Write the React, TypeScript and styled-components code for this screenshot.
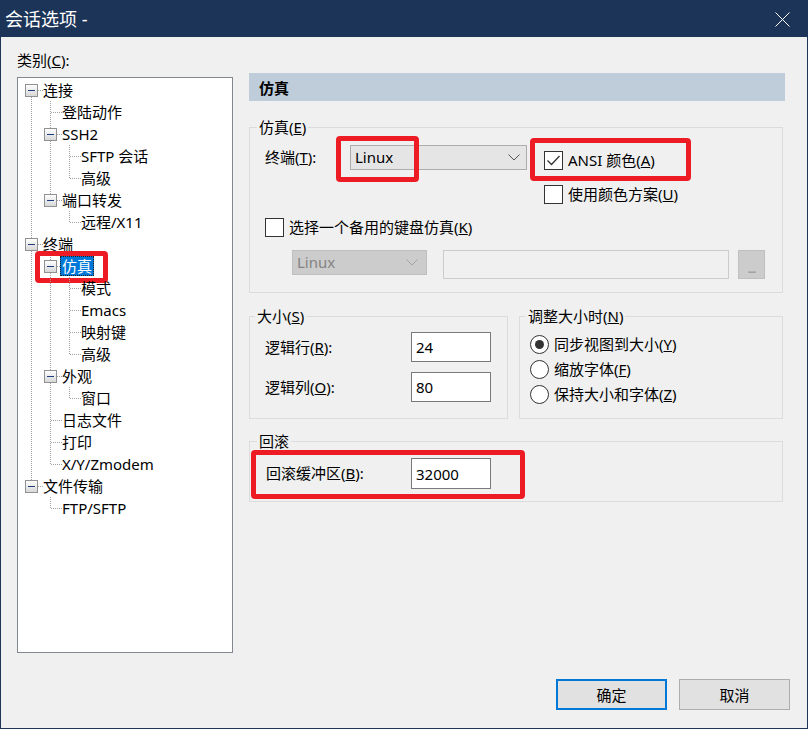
import React, { useId } from "react";
import styled, { createGlobalStyle, css } from "styled-components";

const GlobalStyle = createGlobalStyle`
  html, body {
    margin: 0;
    padding: 0;
    background: #f0f0f0;
  }
  body {
    font-family: "Noto Sans", "Noto Sans CJK SC", sans-serif;
    font-size: 15px;
    color: #000;
  }
  * {
    box-sizing: border-box;
  }
`;

const Window = styled.div`
  width: 808px;
  height: 729px;
  border: 1px solid #1c3458;
  background: #f0f0f0;
  display: flex;
  flex-direction: column;
`;

const TitleBar = styled.div`
  height: 36px;
  flex: none;
  background: #1c3458;
  color: #fff;
  display: flex;
  align-items: center;
  justify-content: space-between;
  padding: 0 17px 0 4px;
  font-size: 18px;
  line-height: 36px;
`;

const Body = styled.div`
  display: grid;
  grid-template-columns: 216px 536px;
  column-gap: 16px;
  padding: 13px 0 0 16px;
`;

const CategoryLabel = styled.div`
  height: 20px;
  line-height: 20px;
`;

const Tree = styled.div`
  margin-top: 7px;
  height: 576px;
  border: 1px solid #828790;
  background: #fff;
  padding-top: 1px;
`;

const TreeRow = styled.div`
  position: relative;
  display: flex;
  align-items: center;
  height: 22px;
  padding-left: 7px;
`;

const GuideSvg = styled.svg`
  flex: none;
  display: block;
  stroke: #a0a0a0;
  stroke-width: 1;
  stroke-dasharray: 1 1;
`;

const NodeLabel = styled.span<{ $selected?: boolean }>`
  margin-left: -3px;
  padding: 0 2px;
  line-height: 20px;
  white-space: nowrap;
  ${(p) =>
    p.$selected &&
    css`
      background: #0078d7;
      color: #fff;
      outline: 1px dotted #222;
      outline-offset: -1px;
    `}
`;

const Mark = styled.span<{ $l: number; $t: number; $w: number; $h: number }>`
  position: absolute;
  left: ${(p) => p.$l}px;
  top: ${(p) => p.$t}px;
  width: ${(p) => p.$w}px;
  height: ${(p) => p.$h}px;
  border: 5px solid #ed1c24;
  border-radius: 4px;
  pointer-events: none;
`;

const Panel = styled.div`
  display: flex;
  flex-direction: column;
  padding-top: 23px;
`;

const PanelHeader = styled.div`
  height: 28px;
  background: #bfcddb;
  padding-left: 10px;
  font-weight: bold;
  line-height: 30px;
`;

const Group = styled.fieldset<{ $top: number }>`
  margin: ${(p) => p.$top}px 2px 0 0;
  padding: 0;
  border: 1px solid #dcdcdc;
  min-width: 0;
`;

const GroupTitle = styled.legend<{ $offset: number }>`
  margin-left: ${(p) => p.$offset}px;
  padding: 0 2px;
  line-height: 18px;
`;

const GroupBody = styled.div<{ $pad: string }>`
  padding: ${(p) => p.$pad};
`;

const FlexRow = styled.div<{ $top?: number; $indent?: number }>`
  position: relative;
  display: flex;
  align-items: flex-start;
  margin-top: ${(p) => p.$top ?? 0}px;
  margin-left: ${(p) => p.$indent ?? 0}px;
`;

const FieldLabel = styled.span<{ $w: number; $h: number }>`
  flex: none;
  width: ${(p) => p.$w}px;
  line-height: ${(p) => p.$h}px;
  white-space: nowrap;
`;

const Select = styled.div<{ $w: number; $disabled?: boolean }>`
  position: relative;
  flex: none;
  width: ${(p) => p.$w}px;
  height: 25px;
  display: flex;
  align-items: center;
  justify-content: space-between;
  padding: 0 ${(p) => (p.$disabled ? 8 : 6)}px 0 4px;
  border: 1px solid ${(p) => (p.$disabled ? "#bfbfbf" : "#adadad")};
  background: ${(p) => (p.$disabled ? "#cccccc" : "#e5e5e5")};
  color: ${(p) => (p.$disabled ? "#838383" : "#000")};
  line-height: 23px;
  svg {
    stroke: ${(p) => (p.$disabled ? "#a5a5a5" : "#555")};
  }
`;

const CheckColumn = styled.div`
  margin: 5px 0 0 17px;
  display: flex;
  flex-direction: column;
  gap: 14px;
`;

const CheckLine = styled.label`
  position: relative;
  display: flex;
  align-items: center;
  height: 20px;
  line-height: 20px;
  white-space: nowrap;
`;

const CheckBox = styled.span`
  flex: none;
  width: 19px;
  height: 19px;
  margin-right: 5px;
  border: 1px solid #333;
  background: #fff;
  display: flex;
  align-items: center;
  justify-content: center;
`;

const DisabledField = styled.div`
  flex: none;
  width: 286px;
  height: 29px;
  margin-left: 16px;
  border: 1px solid #cccccc;
  background: #f0f0f0;
`;

const BrowseButton = styled.div`
  flex: none;
  width: 27px;
  height: 29px;
  margin-left: 9px;
  border: 1px solid #bfbfbf;
  background: #cccccc;
  color: #8a8a8a;
  font-size: 13px;
  line-height: 34px;
  text-align: center;
  letter-spacing: -1px;
`;

const SizeRow = styled.div`
  display: flex;
  gap: 11px;
  margin: 14px 2px 0 0;
`;

const SizeGroup = styled(Group)<{ $w: number }>`
  margin: 0;
  width: ${(p) => p.$w}px;
  flex: none;
`;

const NumberBox = styled.input<{ $h: number }>`
  flex: none;
  width: 80px;
  height: ${(p) => p.$h}px;
  border: 1px solid #7a7a7a;
  background: #fff;
  padding: 0 0 0 4px;
  margin: 0;
  font: inherit;
  color: #000;
  outline: none;
`;

const RadioLine = styled.label`
  display: flex;
  align-items: center;
  height: 25px;
  line-height: 25px;
  white-space: nowrap;
`;

const Radio = styled.span<{ $on?: boolean }>`
  flex: none;
  width: 19px;
  height: 19px;
  margin-right: 5px;
  border: 1px solid #333;
  border-radius: 50%;
  background: #fff;
  display: flex;
  align-items: center;
  justify-content: center;
  &::after {
    content: "";
    width: 9px;
    height: 9px;
    border-radius: 50%;
    background: ${(p) => (p.$on ? "#333" : "transparent")};
  }
`;

const Footer = styled.div`
  display: flex;
  justify-content: flex-end;
  gap: 12px;
  padding: 26px 17px 0 0;
`;

const Button = styled.button<{ $primary?: boolean }>`
  width: 111px;
  height: 31px;
  margin: 0;
  padding: 0;
  font: inherit;
  color: #000;
  background: #e1e1e1;
  border: ${(p) => (p.$primary ? "2px solid #0078d7" : "1px solid #adadad")};
`;

type Guide = "pipe" | "blank" | "tee" | "elbow" | "first";

interface TreeNode {
  label: string;
  guides: Guide[];
  box?: boolean;
  selected?: boolean;
}

const nodes: TreeNode[] = [
  { label: "连接", guides: ["first"], box: true },
  { label: "登陆动作", guides: ["pipe", "tee"] },
  { label: "SSH2", guides: ["pipe", "tee"], box: true },
  { label: "SFTP 会话", guides: ["pipe", "pipe", "tee"] },
  { label: "高级", guides: ["pipe", "pipe", "elbow"] },
  { label: "端口转发", guides: ["pipe", "elbow"], box: true },
  { label: "远程/X11", guides: ["pipe", "blank", "elbow"] },
  { label: "终端", guides: ["tee"], box: true },
  { label: "仿真", guides: ["pipe", "tee"], box: true, selected: true },
  { label: "模式", guides: ["pipe", "pipe", "tee"] },
  { label: "Emacs", guides: ["pipe", "pipe", "tee"] },
  { label: "映射键", guides: ["pipe", "pipe", "tee"] },
  { label: "高级", guides: ["pipe", "pipe", "elbow"] },
  { label: "外观", guides: ["pipe", "tee"], box: true },
  { label: "窗口", guides: ["pipe", "pipe", "elbow"] },
  { label: "日志文件", guides: ["pipe", "tee"] },
  { label: "打印", guides: ["pipe", "tee"] },
  { label: "X/Y/Zmodem", guides: ["pipe", "elbow"] },
  { label: "文件传输", guides: ["elbow"], box: true },
  { label: "FTP/SFTP", guides: ["blank", "elbow"] },
];

const GuideCell: React.FC<{ kind: Guide; box?: boolean }> = ({ kind, box }) => {
  const gid = useId();
  return (
    <GuideSvg width={19} height={22} viewBox="0 0 19 22">
      {(kind === "pipe" || kind === "tee") && <line x1={6.5} y1={0} x2={6.5} y2={22} />}
      {kind === "elbow" && <line x1={6.5} y1={0} x2={6.5} y2={12} />}
      {kind === "first" && <line x1={6.5} y1={12} x2={6.5} y2={22} />}
      {(kind === "tee" || kind === "elbow" || kind === "first") && (
        <line x1={7} y1={11.5} x2={18} y2={11.5} />
      )}
      {box && (
        <>
          <defs>
            <linearGradient id={gid} x1="0" y1="0" x2="0" y2="1">
              <stop offset="0" stopColor="#ffffff" />
              <stop offset="1" stopColor="#d6d6d6" />
            </linearGradient>
          </defs>
          <rect x={0.5} y={5.5} width={12} height={12} fill={`url(#${gid})`} stroke="#919191" strokeDasharray="none" />
          <line x1={3} y1={11.5} x2={10} y2={11.5} stroke="#1f3c7c" strokeDasharray="none" />
        </>
      )}
    </GuideSvg>
  );
};

const Chevron: React.FC = () => (
  <svg width={12} height={7} viewBox="0 0 12 7" fill="none" strokeWidth={1}>
    <polyline points="0.5,0.5 6,6 11.5,0.5" />
  </svg>
);

const CheckMark: React.FC = () => (
  <svg width={15} height={13} viewBox="0 0 15 13" fill="none" stroke="#333" strokeWidth={1.3}>
    <polyline points="1.5,6.5 5.5,10.5 13.5,2" />
  </svg>
);

const CloseIcon: React.FC = () => (
  <svg width={15} height={15} viewBox="0 0 15 15" stroke="#fff" strokeWidth={1}>
    <line x1={0.5} y1={0.5} x2={14.5} y2={14.5} />
    <line x1={14.5} y1={0.5} x2={0.5} y2={14.5} />
  </svg>
);

const App: React.FC = () => {
  return (
    <>
      <GlobalStyle />
      <Window>
        <TitleBar>
          <span>会话选项 -</span>
          <CloseIcon />
        </TitleBar>

        <Body>
          <div>
            <CategoryLabel>
              类别(<u>C</u>):
            </CategoryLabel>
            <Tree>
              {nodes.map((n, i) => (
                <TreeRow key={i}>
                  {n.guides.map((g, j) => (
                    <GuideCell key={j} kind={g} box={n.box && j === n.guides.length - 1} />
                  ))}
                  <NodeLabel $selected={n.selected}>{n.label}</NodeLabel>
                  {n.selected && <Mark $l={17} $t={-4} $w={73} $h={32} />}
                </TreeRow>
              ))}
            </Tree>
          </div>

          <Panel>
            <PanelHeader>仿真</PanelHeader>

            <Group $top={17}>
              <GroupTitle $offset={7}>
                仿真(<u>E</u>)
              </GroupTitle>
              <GroupBody $pad="9px 0 13px 15px">
                <FlexRow>
                  <FieldLabel $w={85} $h={25}>
                    终端(<u>T</u>):
                  </FieldLabel>
                  <Select $w={177}>
                    <span>Linux</span>
                    <Chevron />
                    <Mark $l={-15} $t={-10} $w={83} $h={46} />
                  </Select>
                  <CheckColumn>
                    <CheckLine>
                      <CheckBox>
                        <CheckMark />
                      </CheckBox>
                      ANSI 颜色(<u>A</u>)
                      <Mark $l={-14} $t={-12} $w={161} $h={43} />
                    </CheckLine>
                    <CheckLine>
                      <CheckBox />
                      使用颜色方案(<u>U</u>)
                    </CheckLine>
                  </CheckColumn>
                </FlexRow>

                <FlexRow $top={13}>
                  <CheckLine>
                    <CheckBox />
                    选择一个备用的键盘仿真(<u>K</u>)
                  </CheckLine>
                </FlexRow>

                <FlexRow $top={13} $indent={27}>
                  <Select $w={135} $disabled>
                    <span>Linux</span>
                    <Chevron />
                  </Select>
                  <DisabledField />
                  <BrowseButton>...</BrowseButton>
                </FlexRow>
              </GroupBody>
            </Group>

            <SizeRow>
              <SizeGroup $top={0} $w={259}>
                <GroupTitle $offset={5}>
                  大小(<u>S</u>)
                </GroupTitle>
                <GroupBody $pad="7px 0 16px 15px">
                  <FlexRow>
                    <FieldLabel $w={146} $h={30}>
                      逻辑行(<u>R</u>):
                    </FieldLabel>
                    <NumberBox $h={30} readOnly defaultValue="24" />
                  </FlexRow>
                  <FlexRow $top={10}>
                    <FieldLabel $w={146} $h={30}>
                      逻辑列(<u>O</u>):
                    </FieldLabel>
                    <NumberBox $h={30} readOnly defaultValue="80" />
                  </FlexRow>
                </GroupBody>
              </SizeGroup>

              <SizeGroup $top={0} $w={264}>
                <GroupTitle $offset={6}>
                  调整大小时(<u>N</u>)
                </GroupTitle>
                <GroupBody $pad="7px 0 11px 10px">
                  <RadioLine>
                    <Radio $on />
                    同步视图到大小(<u>Y</u>)
                  </RadioLine>
                  <RadioLine>
                    <Radio />
                    缩放字体(<u>F</u>)
                  </RadioLine>
                  <RadioLine>
                    <Radio />
                    保持大小和字体(<u>Z</u>)
                  </RadioLine>
                </GroupBody>
              </SizeGroup>
            </SizeRow>

            <Group $top={13}>
              <GroupTitle $offset={7}>回滚</GroupTitle>
              <GroupBody $pad="8px 0 12px 16px">
                <FlexRow>
                  <FieldLabel $w={145} $h={31}>
                    回滚缓冲区(<u>B</u>):
                  </FieldLabel>
                  <NumberBox $h={31} readOnly defaultValue="32000" />
                  <Mark $l={-15} $t={-8} $w={274} $h={49} />
                </FlexRow>
              </GroupBody>
            </Group>
          </Panel>
        </Body>

        <Footer>
          <Button $primary>确定</Button>
          <Button>取消</Button>
        </Footer>
      </Window>
    </>
  );
};

export default App;
